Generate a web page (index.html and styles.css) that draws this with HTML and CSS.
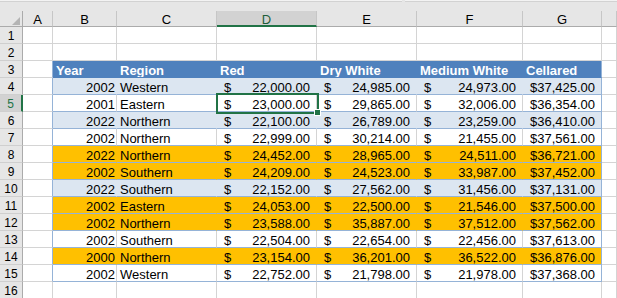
FILE: index.html
```html
<!DOCTYPE html>
<html lang="en">
<head>
  <meta charset="UTF-8">
  <meta name="viewport" content="width=device-width, initial-scale=1.0">
  <title>Wine sales</title>
  <link rel="stylesheet" href="styles.css">
</head>
<body>

  <div class="topbar">
    <span class="faixa faixa-a"></span>
    <span class="faixa faixa-b"></span>
  </div>

  <div class="planilha">

    <div class="linha cabecalho">
      <div class="c canto">
        <svg width="22" height="15" viewBox="0 0 22 15"><polygon points="20,6 20,14 12,14" fill="#b4b4b4"/></svg>
      </div>
      <div class="c col">A</div>
      <div class="c col">B</div>
      <div class="c col">C</div>
      <div class="c col ativo">D</div>
      <div class="c col">E</div>
      <div class="c col">F</div>
      <div class="c col">G</div>
      <div class="c col"></div>
    </div>

    <div class="linha">
      <div class="c rh">1</div>
      <div class="c"></div><div class="c"></div><div class="c"></div><div class="c"></div>
      <div class="c"></div><div class="c"></div><div class="c"></div><div class="c"></div>
    </div>

    <div class="linha">
      <div class="c rh">2</div>
      <div class="c"></div><div class="c"></div><div class="c"></div><div class="c"></div>
      <div class="c"></div><div class="c"></div><div class="c"></div><div class="c"></div>
    </div>

    <!-- tabela -->
    <div class="linha topo">
      <div class="c rh">3</div>
      <div class="c borda"></div>
      <div class="c t">Year</div>
      <div class="c t">Region</div>
      <div class="c t">Red</div>
      <div class="c t">Dry White</div>
      <div class="c t">Medium White</div>
      <div class="c t ultima">Cellared</div>
      <div class="c"></div>
    </div>

    <div class="linha azul">
      <div class="c rh">4</div>
      <div class="c borda"></div>
      <div class="c t num">2002</div>
      <div class="c t txt">Western</div>
      <div class="c t acct"><span>$</span><span>22,000.00</span></div>
      <div class="c t acct"><span>$</span><span>24,985.00</span></div>
      <div class="c t acct"><span>$</span><span>24,973.00</span></div>
      <div class="c t acct ultima"><span>$</span><span>37,425.00</span></div>
      <div class="c"></div>
    </div>

    <div class="linha branca">
      <div class="c rh ativo">5</div>
      <div class="c borda"></div>
      <div class="c t num">2001</div>
      <div class="c t txt">Eastern</div>
      <div class="c t acct selecionada"><span>$</span><span>23,000.00</span></div>
      <div class="c t acct"><span>$</span><span>29,865.00</span></div>
      <div class="c t acct"><span>$</span><span>32,006.00</span></div>
      <div class="c t acct ultima"><span>$</span><span>36,354.00</span></div>
      <div class="c"></div>
    </div>

    <div class="linha azul">
      <div class="c rh">6</div>
      <div class="c borda"></div>
      <div class="c t num">2022</div>
      <div class="c t txt">Northern</div>
      <div class="c t acct"><span>$</span><span>22,100.00</span></div>
      <div class="c t acct"><span>$</span><span>26,789.00</span></div>
      <div class="c t acct"><span>$</span><span>23,259.00</span></div>
      <div class="c t acct ultima"><span>$</span><span>36,410.00</span></div>
      <div class="c"></div>
    </div>

    <div class="linha branca">
      <div class="c rh">7</div>
      <div class="c borda"></div>
      <div class="c t num">2002</div>
      <div class="c t txt">Northern</div>
      <div class="c t acct"><span>$</span><span>22,999.00</span></div>
      <div class="c t acct"><span>$</span><span>30,214.00</span></div>
      <div class="c t acct"><span>$</span><span>21,455.00</span></div>
      <div class="c t acct ultima"><span>$</span><span>37,561.00</span></div>
      <div class="c"></div>
    </div>

    <div class="linha ouro">
      <div class="c rh">8</div>
      <div class="c borda"></div>
      <div class="c t num">2022</div>
      <div class="c t txt">Northern</div>
      <div class="c t acct"><span>$</span><span>24,452.00</span></div>
      <div class="c t acct"><span>$</span><span>28,965.00</span></div>
      <div class="c t acct"><span>$</span><span>24,511.00</span></div>
      <div class="c t acct ultima"><span>$</span><span>36,721.00</span></div>
      <div class="c"></div>
    </div>

    <div class="linha ouro">
      <div class="c rh">9</div>
      <div class="c borda"></div>
      <div class="c t num">2002</div>
      <div class="c t txt">Southern</div>
      <div class="c t acct"><span>$</span><span>24,209.00</span></div>
      <div class="c t acct"><span>$</span><span>24,523.00</span></div>
      <div class="c t acct"><span>$</span><span>33,987.00</span></div>
      <div class="c t acct ultima"><span>$</span><span>37,452.00</span></div>
      <div class="c"></div>
    </div>

    <div class="linha azul">
      <div class="c rh">10</div>
      <div class="c borda"></div>
      <div class="c t num">2022</div>
      <div class="c t txt">Southern</div>
      <div class="c t acct"><span>$</span><span>22,152.00</span></div>
      <div class="c t acct"><span>$</span><span>27,562.00</span></div>
      <div class="c t acct"><span>$</span><span>31,456.00</span></div>
      <div class="c t acct ultima"><span>$</span><span>37,131.00</span></div>
      <div class="c"></div>
    </div>

    <div class="linha ouro">
      <div class="c rh">11</div>
      <div class="c borda"></div>
      <div class="c t num">2002</div>
      <div class="c t txt">Eastern</div>
      <div class="c t acct"><span>$</span><span>24,053.00</span></div>
      <div class="c t acct"><span>$</span><span>22,500.00</span></div>
      <div class="c t acct"><span>$</span><span>21,546.00</span></div>
      <div class="c t acct ultima"><span>$</span><span>37,500.00</span></div>
      <div class="c"></div>
    </div>

    <div class="linha ouro">
      <div class="c rh">12</div>
      <div class="c borda"></div>
      <div class="c t num">2002</div>
      <div class="c t txt">Northern</div>
      <div class="c t acct"><span>$</span><span>23,588.00</span></div>
      <div class="c t acct"><span>$</span><span>35,887.00</span></div>
      <div class="c t acct"><span>$</span><span>37,512.00</span></div>
      <div class="c t acct ultima"><span>$</span><span>37,562.00</span></div>
      <div class="c"></div>
    </div>

    <div class="linha branca">
      <div class="c rh">13</div>
      <div class="c borda"></div>
      <div class="c t num">2002</div>
      <div class="c t txt">Southern</div>
      <div class="c t acct"><span>$</span><span>22,504.00</span></div>
      <div class="c t acct"><span>$</span><span>22,654.00</span></div>
      <div class="c t acct"><span>$</span><span>22,456.00</span></div>
      <div class="c t acct ultima"><span>$</span><span>37,613.00</span></div>
      <div class="c"></div>
    </div>

    <div class="linha ouro">
      <div class="c rh">14</div>
      <div class="c borda"></div>
      <div class="c t num">2000</div>
      <div class="c t txt">Northern</div>
      <div class="c t acct"><span>$</span><span>23,154.00</span></div>
      <div class="c t acct"><span>$</span><span>36,201.00</span></div>
      <div class="c t acct"><span>$</span><span>36,522.00</span></div>
      <div class="c t acct ultima"><span>$</span><span>36,876.00</span></div>
      <div class="c"></div>
    </div>

    <div class="linha branca">
      <div class="c rh">15</div>
      <div class="c borda"></div>
      <div class="c t num">2002</div>
      <div class="c t txt">Western</div>
      <div class="c t acct"><span>$</span><span>22,752.00</span></div>
      <div class="c t acct"><span>$</span><span>21,798.00</span></div>
      <div class="c t acct"><span>$</span><span>21,978.00</span></div>
      <div class="c t acct ultima"><span>$</span><span>37,368.00</span></div>
      <div class="c"></div>
    </div>

    <div class="linha">
      <div class="c rh">16</div>
      <div class="c"></div><div class="c"></div><div class="c"></div><div class="c"></div>
      <div class="c"></div><div class="c"></div><div class="c"></div><div class="c"></div>
    </div>

  </div>

</body>
</html>
```

FILE: styles.css
```css
body {
  font-family: "Liberation Sans", Arial, sans-serif;
  font-size: 13px;
  color: #000;
  background-color: #fff;
  margin: 0;
  overflow: hidden;
}

.topbar {
  height: 11px;
  background-color: #e6e6e6;
  display: flex;
  gap: 3px;
}

.faixa {
  height: 1px;
  background-color: #f3f3f3;
  border-bottom: 1px solid #d2d2d2;
}

.faixa-a {
  width: 402px;
}

.faixa-b {
  flex: 1;
}

.linha {
  display: grid;
  grid-template-columns: 23px 30px 64px 100px 100px 100px 106px 79px 1fr;
  height: 17px;
}

/* celula base */
.c {
  box-sizing: border-box;
  border-right: 1px solid #d4d4d4;
  border-bottom: 1px solid #d4d4d4;
  padding-top: 3px;
  line-height: 13px;
  white-space: nowrap;
  overflow: hidden;
}

/* cabecalho das colunas */
.cabecalho {
  height: 16px;
  background-color: #e6e6e6;
}

.col {
  text-align: center;
  padding-top: 2px;
  border-right-color: #c6c6c6;
  border-bottom-color: #ababab;
}

.col.ativo {
  background-color: #d2d2d2;
  color: #1e5e3a;
  border-bottom: 2px solid #217346;
}

.canto {
  padding: 0;
  border-right-color: #ababab;
  border-bottom-color: #ababab;
}

.canto svg {
  display: block;
}

/* numeros das linhas */
.rh {
  background-color: #e6e6e6;
  text-align: center;
  font-size: 12px;
  line-height: 14px;
  padding-top: 2px;
  border-right-color: #ababab;
  border-bottom-color: #cfcfcf;
}

.rh.ativo {
  background-color: #d2d2d2;
  color: #217346;
  border-right: 2px solid #217346;
}

/* tabela */
.linha .borda {
  border-right-color: #95b3d7;
}

.topo .t {
  background-color: #4f81bd;
  color: #fff;
  font-weight: bold;
  padding-left: 3px;
  border-right-color: #4f81bd;
  border-bottom-color: #4f81bd;
}

.azul .t {
  background-color: #dce6f1;
  border-right-color: #dce6f1;
  border-bottom-color: #95b3d7;
}

.branca .t {
  border-bottom-color: #95b3d7;
}

.ouro .t {
  background-color: #ffc000;
  border-right-color: #ffc000;
  border-bottom-color: #95b3d7;
}

.linha .t.ultima {
  border-right-color: #95b3d7;
}

.num {
  text-align: right;
  padding-right: 1px;
}

.txt {
  padding-left: 3px;
}

.acct {
  display: flex;
  justify-content: space-between;
  padding-left: 7px;
  padding-right: 6px;
}

/* celula selecionada */
.c.selecionada {
  position: relative;
  overflow: visible;
}

.selecionada::before {
  content: "";
  position: absolute;
  left: -1px;
  top: -2px;
  right: -3px;
  bottom: -3px;
  border: 2px solid #217346;
}

.selecionada::after {
  content: "";
  position: absolute;
  right: -5px;
  bottom: -5px;
  width: 5px;
  height: 5px;
  background-color: #217346;
  border: 1px solid #fff;
}
```
